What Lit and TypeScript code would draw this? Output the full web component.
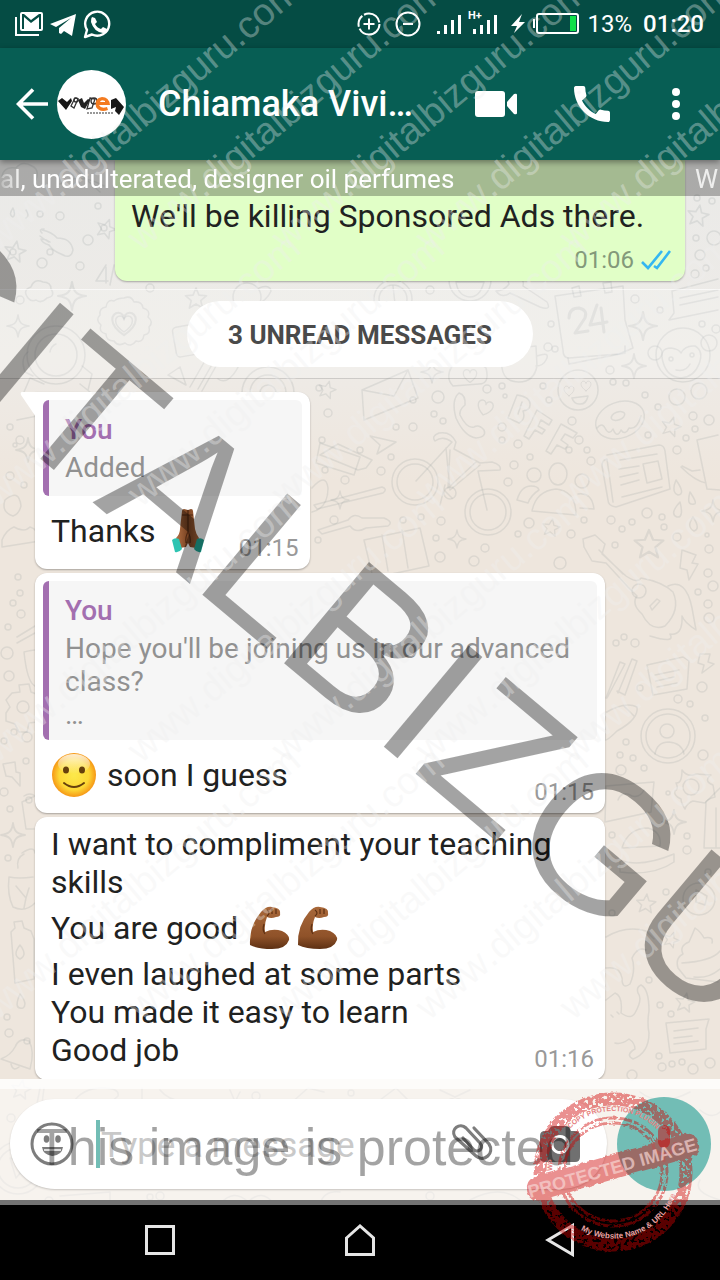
import { LitElement, html, svg, css } from "lit";
import { customElement } from "lit/decorators.js";

/* small bubbles scattered over the wallpaper: x, y, r */
const dots: number[][] = [
  [40, 214, 3], [60, 216, 4], [98, 206, 3], [88, 240, 5], [50, 252, 3], [42, 263, 5], [13, 252, 3], [80, 266, 4], [104, 228, 3],
  [697, 198, 3], [712, 201, 3], [696, 238, 3], [714, 238, 7], [700, 255, 5], [706, 268, 3], [695, 274, 4], [150, 288, 4], [20, 300, 4],
  [430, 290, 4], [635, 299, 4], [660, 310, 3], [551, 324, 3], [548, 347, 4], [555, 349, 3], [702, 324, 3], [716, 329, 4], [610, 370, 4], [626, 383, 3],
  [487, 389, 4], [502, 386, 3], [543, 386, 3], [613, 382, 3], [645, 395, 3], [438, 397, 6], [413, 400, 3], [505, 396, 2], [549, 400, 3],
  [413, 427, 4], [396, 427, 3], [434, 414, 3], [443, 421, 3], [502, 427, 4], [502, 440, 3], [518, 444, 4], [572, 421, 4], [579, 440, 4],
  [569, 450, 3], [587, 450, 3], [658, 407, 3], [693, 416, 4], [709, 420, 5], [695, 429, 3], [686, 438, 3], [648, 435, 3], [677, 450, 4],
  [391, 457, 3], [381, 471, 4], [530, 457, 3], [514, 465, 4], [591, 461, 4], [508, 482, 4], [403, 520, 3], [421, 517, 3], [441, 521, 4],
  [436, 538, 3], [485, 548, 4], [529, 523, 5], [518, 534, 3], [571, 534, 4], [584, 520, 3], [611, 520, 4], [622, 529, 3], [632, 522, 3],
  [647, 513, 5], [662, 517, 3], [664, 527, 3], [677, 537, 4], [707, 535, 2], [709, 549, 4], [615, 545, 3], [440, 557, 5], [474, 561, 5],
  [560, 563, 6], [708, 573, 4], [713, 586, 5], [698, 592, 3], [708, 604, 4], [709, 618, 5], [624, 637, 3], [635, 643, 4], [616, 643, 3],
  [640, 688, 3], [702, 687, 5], [678, 699, 4], [690, 704, 3], [705, 718, 3], [626, 742, 3], [620, 755, 3], [633, 758, 3], [703, 755, 5],
  [621, 770, 5], [644, 768, 3], [612, 835, 3], [668, 793, 2], [687, 836, 3], [687, 850, 4], [666, 892, 3], [612, 913, 3], [708, 872, 3],
  [649, 980, 3], [660, 1005, 3], [671, 1014, 3], [659, 1056, 3], [662, 1067, 4], [672, 1064, 3], [682, 1062, 3], [693, 1069, 5], [710, 1063, 5], [632, 1075, 5],
  [10, 427, 3], [20, 440, 4], [10, 476, 4], [24, 485, 3], [15, 445, 2], [18, 577, 3], [20, 593, 3], [13, 603, 3], [21, 614, 4],
  [8, 627, 3], [7, 653, 6], [9, 676, 5], [14, 732, 3], [27, 737, 5], [4, 741, 3], [26, 761, 3], [4, 792, 4], [10, 809, 3], [8, 858, 3], [29, 800, 3],
  [7, 1017, 3], [9, 1033, 4], [11, 1118, 4], [49, 1201, 4], [256, 1096, 4], [351, 1093, 3], [160, 1196, 4], [150, 1197, 3], [430, 1196, 4],
  [319, 388, 3], [328, 413, 4], [322, 440, 3], [334, 520, 4], [318, 540, 3], [345, 480, 4], [325, 470, 3], [360, 450, 3],
];

/* five-pointed stars: x, y, scale, turn */
const stars: number[][] = [
  [15, 252, 1.1, 10], [106, 229, 1, 20], [196, 299, 1.1, 0], [327, 390, 0.9, 15], [698, 216, 1.1, 10], [671, 427, 1, 15],
  [551, 528, 0.9, 10], [649, 545, 1.5, 0], [646, 904, 1, 5], [671, 940, 0.8, 20], [685, 1003, 1, 10], [21, 1090, 1, 10],
];

/* four-pointed sparkles: x, y, scale */
const sparkles: number[][] = [
  [18, 326, 1.1], [72, 296, 1.4], [643, 326, 1.4], [634, 366, 1.2], [432, 372, 1.1], [457, 539, 0.9], [713, 511, 1.1],
  [674, 822, 1.2], [13, 835, 1.2], [28, 450, 1.2], [340, 500, 0.9],
];

const starPath = "M0-10 2.7-3.5 9.6-3 4.3 1.4 6 8.2 0 4.5-6 8.2-4.3 1.4-9.6-3-2.7-3.5Z";
const sparklePath = "M0-10C1-3 3-1 10 0 3 1 1 3 0 10-1 3-3 1-10 0-3-1-1-3 0-10Z";
const heartPath = "M0 8C-12 0-9-8-4-8-1-8 0-5 0-4 0-5 1-8 4-8 9-8 12 0 0 8Z";

const wallpaper = () => svg`
  <g class="doodle">
    ${dots.map(([x, y, r]) => svg`<circle cx=${x} cy=${y} r=${r} />`)}
    ${stars.map(([x, y, s, t]) => svg`<path d=${starPath} transform="translate(${x} ${y}) rotate(${t}) scale(${s})" />`)}
    ${sparkles.map(([x, y, s]) => svg`<path d=${sparklePath} transform="translate(${x} ${y}) scale(${s})" />`)}
    <!-- hand, cloud, number -->
    <path d="M42 230q10 2 15 8 14 0 16 12-2 10-12 4-8-3-12-9-7-2-8-6 5 0 9 3M40 236q5 4 9 6M44 229q-6 0-2 4" />
    <path d="M28 298q-6-8 3-11 3-9 12-5 8 0 8 7 5 7-4 9-6 6-11 2-5 2-8-2Z" />
    <path d="M106 265l-10 16 12 0m-2-14 0 16m8-18-4 20" />
    <path d="M2 176q2-10 14-8 6-8 16-2 8 4 4 14M60 184q20-12 44 2M76 170l24 22" />
    <!-- rosette with heart -->
    <path d="M124 298q7-3 10 4 8-1 9 6 8 2 5 9 6 5 1 10 2 7-5 8-1 8-8 6-5 7-11 2-7 4-11-2-8 0-8-7-8-2-5-9-6-5-1-10-1-7 6-8 1-8 8-6 4-3 10-3Z" />
    <path d=${heartPath} transform="translate(124 324) scale(1.4)" />
    <path d=${heartPath} transform="translate(124 324)" />
    <!-- astronaut -->
    <circle cx="56" cy="355" r="29" /><circle cx="56" cy="355" r="21" /><path d="M28 352q-8 6-3 20l8 4M82 366l10 8-4 16M24 392l6-14 14 6M80 384l10 8M50 352q1-6 6-8" />
    <!-- camera -->
    <rect x="174" y="324" width="44" height="30" rx="4" transform="rotate(-10 196 338)" /><circle cx="198" cy="338" r="9" />
    <!-- target, drumsticks, planet -->
    <circle cx="268" cy="393" r="26" /><circle cx="268" cy="393" r="18" /><circle cx="268" cy="393" r="8" />
    <path d="M168 375l12-8 6 18Zm22 12 16-28m8 2-16 28m22-30-18 32M218 379q12 8 24-20" />
    <circle cx="247" cy="297" r="14" /><path d="M235 303q-12 8 2 8 28-5 34-20-1-7-12-3" />
    <!-- compass, smile, wrench -->
    <circle cx="393" cy="299" r="19" /><circle cx="393" cy="299" r="14" /><path d="M393 286l2 18" />
    <circle cx="470" cy="280" r="21" /><path d="M456 282h28q-4 15-14 15-12-1-14-15Z" />
    <path d="M496 291q6 8 14 2l30 14q12 4 7-5l-24-16q2-8-8-10-9 2-6 8-5 7-13 7Z" />
    <!-- calendar -->
    <path d="M555 296l68-10 2 34 8 28-14 6-50 4q-6 0-6-8Z" /><path d="M568 358l1 6 56-11v-7M572 288l2 9 7-1-2-10Zm31-5 2 10 7-1-1-10Z" />
    <path d="M569 318q0-10 10-10 9 2 6 10l-10 15 13-2M597 305l-7 20 17-3m-6-14 3 24" stroke-width="3" />
    <!-- speech card -->
    <path d="M672 291l46-12M672 291l2 22-5 7 49-10M680 298l38-8M680 305l38-8" />
    <!-- monkey -->
    <circle cx="683" cy="355" r="27" /><circle cx="655" cy="353" r="7" /><circle cx="709" cy="343" r="8" /><path d="M663 362q-4-14 8-14 8 1 10 5 4-8 14-7 9 5 4 18-5 13-18 14-14-1-18-16ZM676 370q10 2 14-6" />
    <circle cx="671" cy="359" r="2" /><circle cx="692" cy="355" r="2" /><circle cx="677" cy="397" r="8" /><circle cx="699" cy="391" r="8" />
    <!-- heart eyes, coffee, envelope -->
    <circle cx="578" cy="390" r="20" /><path d=${heartPath} transform="translate(569 391) scale(.6)" /><path d=${heartPath} transform="translate(586 386) scale(.6)" /><path d="M572 398l16-2q-2 9-9 8-5 0-7-6Z" />
    <path d="M500 350l36-4 1 20q-3 16-18 16-15 0-17-14Zm37 6q14-5 9 4-3 6-10 6M452 366q24-8 34 2 4 16-7 16l-26 2q-8-8-1-20Z" /><path d=${heartPath} transform="translate(470 376) scale(.8)" />
    <path d="M362 390l46-20 10 28-54 22ZM362 390l32 6 14-26" />
    <!-- phone and BFF -->
    <path d="M459 393q7 2 6 12-6 5-5 10 7 14 14 12 5-3 10 3 3 7-8 8-12-2-20-20-5-18 3-25Z" /><path d=${heartPath} transform="translate(485 408) rotate(15) scale(.9)" />
    <path d="M517 395q14 2 13 10 0 5-7 6 3 8-4 12l-11-5Zm5 7-4 12M537 410l15 10-3 5-8-5-3 6 7 4-3 4-7-4-6 9-5-3Zm24 14 16 9-4 5-8-4-4 6 7 5-3 4-8-4-6 9-5-3Z" />
    <!-- doughnut -->
    <ellipse cx="620" cy="420" rx="25" ry="18" transform="rotate(-20 620 420)" /><ellipse cx="618" cy="416" rx="7" ry="4" transform="rotate(-20 618 416)" /><path d="M597 428q5-6 8 0 4 8 8 1 4 10 8 1 4 6 8-2 8 2 12-12" />
    <!-- bicycle -->
    <circle cx="415" cy="482" r="23" /><circle cx="415" cy="482" r="18" /><circle cx="488" cy="512" r="23" /><circle cx="488" cy="512" r="18" />
    <path d="M416 481l36-39q-9-7-17-1-4-5 4-8 12-2 17 9l-2 7 26 14 12-1q10 3 8 8l-22 1 9 39M446 448l4 42 30-25M450 450l-2 38 28-26M444 490l8 8m-7-13-5 20" /><circle cx="450" cy="493" r="6" />
    <path d="M370 436l26 6-19 12 3-9Z" />
    <!-- people, newspaper, mug -->
    <circle cx="534" cy="475" r="7" /><ellipse cx="558" cy="474" rx="9" ry="11" /><circle cx="582" cy="481" r="7" /><path d="M532 511q4-20 24-22 20 2 20 26ZM517 500q4-14 14-14 7 0 8 4-8 5-11 13ZM578 494q14-2 16 15l-14-1" />
    <path d="M607 455l52-10q5 0 6 6l5 38-54 18q-8-1-8-7l-6-34q0-6 5-7l6 43M620 460l37-6M619 469l20-3M620 477l18-4M621 485l18-5M622 497l40-10M643 464l15-3 4 18-15 4Z" />
    <path d="M697 440l21-5M697 440l10 49 13 1M682 466l10 5 8-1M681 467q14 14 25 16" />
    <!-- drops -->
    <path d="M676 480q10 14 2 15-7-3-2-15ZM690 492q8 12 4 12-8 2-4-12ZM680 502q4 16-3 15-8-3 3-15ZM693 517q8 12 1 14-8-4-1-14ZM13 208q3 7 0 9-5-2 0-9ZM26 210q4 6 0 8M20 994q8 10 3 14-10 2-3-14Z" />
    <!-- pencil, rattle, map on the left of the bicycle -->
    <path d="M320 455l18-11 34 16-6 8-8 2-32-13Zm-6 50 68-18q6 2 1 6l-66 16ZM318 530l30-10q6-8 14-2h22q10 4 4 8l-22 2q-10 6-16-2l-28 8Z" />
    <path d="M364 540l56-12 9 38-56 12ZM382 535l6 36m14-41 6 38" />
    <!-- jar and balloon left -->
    <path d="M17 420l20-4M320 443l40 14-6 18-38-12Zm-8 45q14-16 16 0 0 20-16 24M5 500q14-12 16 6-2 8-8 10-12-4-8-16Zm-3 40q4-10 12-13 10 6 16 0 8 2 10 14l-38 6Z" />
    <!-- guitar -->
    <path d="M583 539l12-4 10 9-3 10 24 22q12 8 15 2 22 4 32 14 8 18-8 34-14 6-23-12-11-10-5-18l-9-9-22-24-14-2-8-14Zm16 11 24 24" /><circle cx="639" cy="591" r="7" /><path d="M650 606l7-7 3 2-8 9ZM668 586q18-8 24 22l4 22q-12-8-14-14 1 20-12 18 6 10-20 2" />
    <path d="M682 550l14 5-4 8 6 1-9 16-2-10-7-2Z" />
    <!-- tools and chat card -->
    <path d="M606 698l14-36 5 2-18 34M618 693l14-34 5 2-12 34-8-4ZM647 665l36-8 6 4-2 28-34 6ZM655 675l24-5M656 681l18-4M657 687l20-4M700 654l10 0-2 8 6 2-12 9 2-8-6-2Z" />
    <!-- rocket and profile disc -->
    <path d="M605 713q20-12 32-6 2 12-20 24-10 10-12 9ZM624 706l10 10" /><circle cx="668" cy="736" r="27" /><circle cx="668" cy="736" r="22" /><circle cx="667" cy="731" r="7" /><path d="M655 754q2-12 14-12 13 1 15 12" />
    <!-- paint splash and popcorn -->
    <path d="M682 770q6 8 14 4l15 1q-8 6 2 10l2 12q-8 2-10 6l-12-2q-6 2-8 8-4-6-4-10-8-4-6-8 4-2 1-8 6 1 6-13Z" /><circle cx="691" cy="787" r="8" />
    <path d="M606 786l48-4-3 30-46 10ZM618 800q4-10 14-4 8 2 12-6M622 848q6-20 26-20 14 4 12 18Zm-2 12q20 8 54-6v8q-20 14-54 10Z" />
    <path d="M706 802l14-14M706 802l-2 46h16M716 808v40" />
    <!-- cake, cat -->
    <circle cx="699" cy="899" r="16" /><path d="M696 890l11 6-2 9-9-3ZM683 954q-4-8 6-12 4-9 6-14 6 4 9 10 10-2 8 5M683 954q-8 4-5 14l8 10 32 4M682 963q30-2 38-12M694 977q14 2 26-8" />
    <path d="M606 937q20-12 40-6l8 8M606 968q14-2 16 10 0 12 8 6 6-14 2-26 6-12 14-8M606 1000l9-7q8 3 6 20 10 7 14 0 8-14 3-20-2-6 3-8 8 4 8 26-2 12 0 22 0 20-16 26-8-4 2-10 0-6-6-10-8 6-14 4M611 1015l2 2m4-5 2 2" />
    <!-- mailbox, cupcake, gear, leaf, bottle, bell -->
    <path d="M666 1023l43-4-3 10v20l-36 4ZM674 1031l24-3M674 1038l18-2M674 1044l24-3" />
    <path d="M16 693l10-1 2 8 8 3 4 6-3 6 3 7-6 8-8 1-2 9h-8l-4-8-9-3v-8l4-6-4-7 6-7 8-1Z" transform="translate(3 -8)" /><circle cx="23" cy="707" r="6" />
    <path d="M17 637l18-11M17 643l18-10M24 652q8-2 11-2M24 652q3 30 11 34M3 764l12-2 1 10 4 1v13l-8-9-6-1ZM24 796q6-4 11 0l-13 6 4 27 8 0" />
    <path d="M9 877q10 2 24 0M9 877q-2 18 4 30 12 6 22-4M16 886l10 12 3-10M26 898l-2 10M11 932l4-4-1-6 8-1 2 7 7 3 3 8v40l-19 4Z" /><path d="M20 945q8 10 0 14-8-4 0-14Z" />
    <path d="M1 1059q10-4 14-12 4-10 14-6 6 10 1 28Zm10 5q2 8 8 3" /><circle cx="27" cy="1041" r="3" />
    <path d="M22 853q12-8 13 0M18 868q-2-10 6-14" />
    <!-- shapes under the compose bar -->
    <path d="M40 1088l-3 16M44 1088l-2 16M72 1104q10-16 30-16 18 0 16 8-10 12-36 8M142 1088v16M160 1090q8 10 24 12M230 1090l6 14m4-12-6 12M290 1104l18-16 16 4M380 1100l16-12 14 14M440 1090l30 14m0-14-30 14M60 1196l50-4v12M220 1204q14-16 28-2 14-14 26 2M320 1204q4-14 20-12M470 1200q30-16 50 0M640 1092q20 16 50 0M700 1110q12 10 20 2M700 1180q-8 12 20 20" />
    <circle cx="18" cy="1168" r="26" /><circle cx="18" cy="1168" r="20" /><path d="M10 1158l6 20 12-14Z" />
  </g>`;

const prayer = html`<svg class="emoji" viewBox="0 0 48 48" role="img" aria-label="folded hands">
  <defs><linearGradient id="palm" x1="0" x2="1"><stop offset="0" stop-color="#b26f43" /><stop offset=".5" stop-color="#7a4423" /><stop offset="1" stop-color="#a9663c" /></linearGradient></defs>
  <path fill="url(#palm)" d="M18 4q0-2 2-2l4 1 3-1q2 0 2 2l2 18q1 5 4 9l-3 10-6-1-2-4-2 4-6 1-4-10q4-4 4-9Z" />
  <path fill="none" stroke="#4d2712" stroke-width="1.200" d="M24 3v22q-3 5-2 11M24 25q3 5 2 11M18 8h11" />
  <path fill="#2ec4b2" d="M8 33q3-3 7-1l3 10q-3 4-7 3Z" /><path fill="#22ad9c" d="M40 33q-3-3-7-1l-3 10q3 4 7 3Z" />
</svg>`;

const smile = html`<svg class="emoji" viewBox="0 0 48 48" role="img" aria-label="slightly smiling face">
  <defs><radialGradient id="face" cx=".5" cy=".5" r=".52"><stop offset="0" stop-color="#fce94b" /><stop offset=".65" stop-color="#fdd835" /><stop offset="1" stop-color="#f58f12" /></radialGradient>
  <linearGradient id="shine" x1="0" x2="0" y1="0" y2="1"><stop offset="0" stop-color="#fff" stop-opacity=".8" /><stop offset="1" stop-color="#fff" stop-opacity="0" /></linearGradient></defs>
  <circle cx="23" cy="24" r="22" fill="url(#face)" /><ellipse cx="23" cy="13" rx="16" ry="10" fill="url(#shine)" />
  <ellipse cx="15" cy="19" rx="3" ry="3.500" fill="#66400c" /><ellipse cx="31" cy="19" rx="3" ry="3.500" fill="#66400c" />
  <path d="M13 32q10 8 20 0" fill="none" stroke="#66400c" stroke-width="2" stroke-linecap="round" />
</svg>`;

const muscle = html`<svg class="emoji" viewBox="0 0 48 48" role="img" aria-label="flexed biceps">
  <defs><linearGradient id="arm" x1="0" x2="0" y1="0" y2="1"><stop offset="0" stop-color="#a8683a" /><stop offset=".7" stop-color="#8f5229" /><stop offset="1" stop-color="#5d3013" /></linearGradient></defs>
  <path fill="url(#arm)" d="M4 41Q3 22 15 8q5-6 11-5 9 1 8 6 1 4-4 4-5 2-9 0-3 7-2 15 8-4 17-1 8 4 7 9-3 9-17 9-14 0-22-4Z" />
  <path fill="none" stroke="#5d3013" stroke-width="1.200" d="M26 5v5m4-5v5M21 6q4 3 0 6M18 20q-2 6 1 10" />
</svg>`;

@customElement("app-root")
export class AppRoot extends LitElement {
  static styles = css`
    :host { display: block; }
    * { box-sizing: border-box; }
    button { border: 0; padding: 0; background: none; color: inherit; font: inherit; display: flex; align-items: center; justify-content: center; flex: none; }
    svg { display: block; flex: none; }
    .phone { position: relative; display: flex; flex-direction: column; height: 100vh; overflow: hidden; font-family: Roboto, sans-serif; color: #1f2221; background: #eee6dd; }

    .status { flex: none; height: 48px; padding: 0 16px 0 15px; display: flex; align-items: center; justify-content: space-between; background: #054c44; color: #fff; font-size: 24px; }
    .status-group { display: flex; align-items: center; gap: 8px; }
    .clock { font-weight: 500; margin-left: 3px; }

    .bar { flex: none; height: 112px; padding-right: 8px; display: flex; align-items: center; background: #075e54; color: #fff; position: relative; z-index: 1; box-shadow: 0 2px 6px rgba(0, 0, 0, .4); }
    .back { width: 57px; height: 64px; padding-left: 7px; }
    .avatar { width: 69px; height: 69px; border-radius: 50%; background: #fff; overflow: hidden; }
    .name { flex: 1; min-width: 0; margin: 0 0 0 32px; font-size: 36px; line-height: 44px; font-weight: 500; white-space: nowrap; overflow: hidden; text-overflow: ellipsis; }
    .action { width: 96px; height: 64px; }
    .more { width: 72px; }

    .stage { position: relative; flex: 1; min-height: 0; display: flex; flex-direction: column; background: linear-gradient(#eaeae8, #eeebe7 200px, #eee6dd 320px, #eee6dd); }
    .wallpaper { position: absolute; inset: 0; width: 100%; height: 100%; }
    .doodle { fill: none; stroke: #8c9696; stroke-opacity: .18; stroke-width: 1.5; stroke-linejoin: round; stroke-linecap: round; }

    .chat { position: relative; flex: 1; min-height: 0; overflow: hidden; display: flex; flex-direction: column; }
    .ticker { position: absolute; z-index: 1; top: 0; left: 0; right: 0; height: 36px; display: flex; justify-content: space-between; padding: 0 2px 0 0; background: rgba(0, 0, 0, .27); color: #fff; font-size: 26px; line-height: 38px; white-space: nowrap; overflow: hidden; }
    .ticker-text { -webkit-mask-image: linear-gradient(90deg, rgba(0, 0, 0, .2), #000 24px); mask-image: linear-gradient(90deg, rgba(0, 0, 0, .2), #000 24px); }
    .ticker-next { opacity: .8; }

    .bubble { position: relative; flex: none; display: flex; flex-direction: column; background: #fff; border-radius: 12px; padding: 8px 8px 7px; box-shadow: 0 1px 2px rgba(0, 0, 0, .3); max-width: calc(100% - 80px); }
    .thread { display: flex; flex-direction: column; align-items: flex-start; gap: 4px; padding: 0 35px; }
    .thread-in { padding-top: 13px; }
    .out { align-self: flex-end; width: calc(100% - 80px); background: #e1ffc7; padding-top: 37px; border-radius: 0 0 12px 12px; }
    .first { border-top-left-radius: 0; }
    .tail { position: absolute; top: 0; left: -15px; }
    .quote { display: flex; flex-direction: column; gap: 5px; min-height: 96px; padding: 13px 16px 9px; border-left: 6px solid #a36fb0; border-radius: 6px; background: #f6f6f6; font-size: 28px; line-height: 33px; color: #919191; }
    .quote + .text { margin-top: 8px; }
    .author { color: #a36fb0; font-weight: 500; }
    .quote p, .text p { margin: 0; }
    .text { padding: 0 8px; font-size: 32px; line-height: 38px; }
    .text .with-emoji { display: flex; align-items: center; height: 54px; gap: 8px; }
    .emojis { display: flex; }
    .emoji { width: 48px; height: 48px; }
    .stamp { display: flex; align-items: center; justify-content: flex-end; gap: 7px; margin-top: -24px; padding: 0 3px; font-size: 24px; line-height: 28px; color: #999; }
    .short { padding-right: 90px; }
    .out .stamp { margin-top: 11px; padding-right: 6px; color: #83997a; }

    .unread { flex: none; height: 90px; margin-top: 8px; display: flex; align-items: center; justify-content: center; background: rgba(255, 255, 255, .2); border-top: 1px solid rgba(255, 255, 255, .6); border-bottom: 1px solid rgba(0, 0, 0, .15); }
    .pill { height: 66px; padding: 0 41px; border-radius: 33px; background: #fff; color: #4a4a4a; font-size: 26px; line-height: 68px; font-weight: 700; }

    .compose { position: relative; flex: none; display: flex; align-items: center; gap: 10px; padding: 10px 9px 11px 10px; background: rgba(255, 255, 255, .5); border-top: 10px solid rgba(255, 255, 255, .72); }
    .compose-foot { position: relative; flex: none; height: 5px; background: #737373; }
    .field { flex: 1; min-width: 0; height: 90px; display: flex; align-items: center; padding: 0 27px 0 20px; border-radius: 45px; background: #fff; box-shadow: 0 1px 2px rgba(0, 0, 0, .2); color: #7d7d7d; }
    .caret { flex: none; width: 4px; height: 48px; margin: 0 1px 0 22px; background: #72bdb5; }
    .entry { flex: 1; min-width: 0; height: 60px; border: 0; padding: 2px 0 0; outline: 0; background: none; font: 35px Roboto, sans-serif; color: #1f2221; }
    .entry::placeholder { color: #c9c9c9; opacity: 1; }
    .attach { margin-right: 47px; }
    .mic { width: 94px; height: 94px; margin: -2px 0; border-radius: 50%; background: #72bdb5; }

    .nav { flex: none; height: 75px; display: flex; justify-content: center; gap: 120px; padding-bottom: 5px; background: #000; }
    .nav button { width: 80px; }

    .marks { position: absolute; z-index: 2; inset: 0; width: 100%; height: 100%; pointer-events: none; }
    .site { font-family: "Liberation Sans", Arial, sans-serif; font-size: 38px; fill: #efefef; fill-opacity: .36; font-kerning: none; }
    .brand { font-family: "Liberation Sans", Arial, sans-serif; font-size: 192px; fill: #000; fill-opacity: .36; font-kerning: none; }
    .notice { font-family: "Liberation Sans", Arial, sans-serif; font-size: 52px; fill: #000; fill-opacity: .36; }
    .seal-text { font-family: "Liberation Sans", Arial, sans-serif; font-weight: 700; }
  `;

  private site() {
    const rows = [252, 508, 764, 1021];
    const cols = [-11, 133, 277, 421, 565];
    return rows.map((y) =>
      cols.map((x) => svg`<text class="site" transform="translate(${x + 8} ${y}) rotate(-40)">www.digitalbizguru.com</text>`)
    );
  }

  render() {
    return html`
      <div class="phone">
        <div class="status">
          <svg width="96" height="48" viewBox="15 0 96 48" fill="#fff" aria-hidden="true">
            <path d="M15 17h2v17h22v2H15Z" />
            <path fill-rule="evenodd" d="M22 12h19q2 0 2 2v15q0 2-2 2H22q-2 0-2-2V14q0-2 2-2Zm0 2v15h2V17l7 6 8-6v12h2V14h-2l-8 6-7-6Z" />
            <path d="M50 24 76 14 72 36 64 31 61 34 59 33 59 28 71 18 56 27Z" />
            <path d="M85 37l2-7A12 12 0 1 1 92 34.500Z" fill="none" stroke="#fff" stroke-width="2.400" stroke-linejoin="round" />
            <path d="M92 17l3 1 2 4-2 2q2 4 6 5l2-2 4 2q0 4-4 4-9-1-12-11 0-4 1-5Z" />
          </svg>
          <div class="status-group">
            <svg width="223" height="48" viewBox="358 0 223 48" fill="#fff" aria-hidden="true">
              <g fill="none" stroke="#fff" stroke-width="2">
                <circle cx="370" cy="24" r="10.500" stroke-dasharray="28 2 12 2 20 2" /><path d="M364.500 24h11M370 18.500v11" />
                <circle cx="409" cy="24" r="11.500" /><path d="M404 24h10" />
                <rect x="538" y="14" width="41" height="19" rx="2" />
              </g>
              <path d="M438 31h3v3h-3Zm7-6h3v9h-3Zm7-5h3v14h-3Zm7-5h3v19h-3ZM474 29h3v5h-3Zm7-4h3v9h-3Zm7-5h3v14h-3Zm7-5h3v19h-3Z" />
              <path d="M523 14l-11 12h6l-3 7 11-11h-6Z" /><path d="M534 19h2v9h-2Z" /><path fill="#10e04a" d="M571 16h6v15h-6Z" />
              <text x="469" y="19" font-family="Roboto, sans-serif" font-weight="700" font-size="11">H+</text>
            </svg>
            <span>13%</span>
            <span class="clock">01:20</span>
          </div>
        </div>

        <header class="bar">
          <button class="back" aria-label="Back">
            <svg width="32" height="32" viewBox="0 0 32 32" fill="none" stroke="#fff" stroke-width="3.600"><path d="M17 1.500 2.500 16 17 30.500M2 16h30" /></svg>
          </button>
          <svg class="avatar" viewBox="0 0 69 69" role="img" aria-label="Contact photo">
            <path d="M1 31l4-3 5 4 4-4 1 3-6 9Z" fill="#171717" />
            <g fill="none" stroke="#333" stroke-width="1.300"><path d="M14 36l4-8 3 1-4 9Z" /><path d="M33 28l5 1-3 9-5 1Z" /><circle cx="19" cy="30" r="2" /><circle cx="37" cy="31" r="3" /></g>
            <path d="M21 30l4-2 2 5 4-4 2 1-5 9-4-2Z" fill="#222" />
            <path d="M53 35H42q2 4 8 2l1 3q-8 3-12-3-2-9 6-10 7 0 8 8Zm-5-4q-4-2-5 1h5Z" fill="#f47b20" fill-rule="evenodd" />
            <path d="M54 39V30l5-2 8 9-5 8-4-4 1-4Z" fill="#171717" /><path d="M30 43h26" stroke="#777" stroke-width="1.500" stroke-dasharray="2 1" />
          </svg>
          <h1 class="name">Chiamaka Vivi…</h1>
          <button class="action" aria-label="Video call">
            <svg width="42" height="26" viewBox="0 0 42 26" fill="#fff"><rect width="30" height="26" rx="3" /><path d="M32 11l7-8q3-1 3 1v18q0 2-3 1l-7-8Z" /></svg>
          </button>
          <button class="action" aria-label="Voice call">
            <svg width="36" height="36" viewBox="3 3 18 18" fill="#fff"><path d="M20.010 15.380c-1.230 0-2.420-.2-3.530-.56-.35-.12-.74-.03-1.010.24l-1.570 1.970c-2.830-1.350-5.480-3.900-6.890-6.830l1.950-1.660c.27-.28.35-.67.24-1.020-.37-1.110-.56-2.300-.56-3.530 0-.54-.45-.99-.99-.99H4.190C3.650 3 3 3.240 3 3.990 3 13.280 10.730 21 20.010 21c.71 0 .99-.63.99-1.180v-3.450c0-.54-.45-.99-.99-.99z" /></svg>
          </button>
          <button class="action more" aria-label="More options">
            <svg width="8" height="32" viewBox="0 0 8 32" fill="#fff"><circle cx="4" cy="4" r="4" /><circle cx="4" cy="16" r="4" /><circle cx="4" cy="28" r="4" /></svg>
          </button>
        </header>

        <div class="stage">
          <svg class="wallpaper" viewBox="0 160 720 1045" preserveAspectRatio="xMidYMin slice" aria-hidden="true">${wallpaper()}</svg>
          <main class="chat">
            <div class="ticker"><span class="ticker-text">al, unadulterated, designer oil perfumes</span><span class="ticker-next">W</span></div>
            <div class="thread">
              <article class="bubble out">
                <div class="text"><p>We'll be killing Sponsored Ads there.</p></div>
                <div class="stamp">
                  <time>01:06</time>
                  <svg width="30" height="20" viewBox="0 0 30 20" fill="none" stroke="#34b7f1" stroke-width="2.600" role="img" aria-label="Read"><path d="M1 12l6 6L21 1M13 16l3 2L29 1" /></svg>
                </div>
              </article>
            </div>
            <div class="unread"><span class="pill">3 UNREAD MESSAGES</span></div>
            <div class="thread thread-in">
              <article class="bubble first">
                <svg class="tail" width="16" height="25" viewBox="0 0 16 25" fill="#fff" aria-hidden="true"><path d="M16 0H2Q0 0 1 3l15 22Z" /></svg>
                <div class="quote"><div class="author">You</div><p>Added</p></div>
                <div class="text short"><p class="with-emoji"><span>Thanks</span>${prayer}</p></div>
                <div class="stamp"><time>01:15</time></div>
              </article>
              <article class="bubble">
                <div class="quote"><div class="author">You</div><p>Hope you'll be joining us in our advanced class?<br />…</p></div>
                <div class="text"><p class="with-emoji">${smile}<span>soon I guess</span></p></div>
                <div class="stamp"><time>01:15</time></div>
              </article>
              <article class="bubble">
                <div class="text">
                  <p>I want to compliment your teaching skills</p>
                  <p class="with-emoji"><span>You are good</span><span class="emojis">${muscle}${muscle}</span></p>
                  <p>I even laughed at some parts</p>
                  <p>You made it easy to learn</p>
                  <p>Good job</p>
                </div>
                <div class="stamp"><time>01:16</time></div>
              </article>
            </div>
          </main>

          <footer class="compose">
            <div class="field">
              <button aria-label="Emoji">
                <svg width="44" height="44" viewBox="0 0 44 44"><circle cx="22" cy="22" r="20" fill="none" stroke="#7d7d7d" stroke-width="3" /><ellipse cx="16.500" cy="17" rx="2.800" ry="3.800" fill="#7d7d7d" /><ellipse cx="28" cy="17" rx="2.800" ry="3.800" fill="#7d7d7d" /><path d="M12 25h21q-1 8-10.500 9Q13 33 12 25Z" fill="#7d7d7d" /><path d="M14 28h17" stroke="#fff" stroke-width="1.500" /></svg>
              </button>
              <span class="caret"></span>
              <input class="entry" type="text" aria-label="Message" placeholder="Type a message" />
              <button class="attach" aria-label="Attach">
                <svg width="42" height="40" viewBox="0 0 42 40" fill="none" stroke="#7d7d7d" stroke-width="3.200" stroke-linecap="round"><path d="M23 4l15 16c6 9-5 19-13 12L4 13C-1 5 9-2 15 4l14 15c5 6-3 10-6 7L12 14" /></svg>
              </button>
              <button aria-label="Camera">
                <svg width="40" height="38" viewBox="0 0 40 38"><path fill-rule="evenodd" fill="#707070" d="M13 1h14q2 0 3 3l1 2h4q5 0 5 5v21q0 5-5 5H5q-5 0-5-5V11q0-5 5-5h3l2-3q1-2 3-2Zm7 9a9.500 9.500 0 1 0 .1 0Zm0 3a6.500 6.500 0 1 1-.1 0Z" /></svg>
              </button>
            </div>
            <button class="mic" aria-label="Voice message">
              <svg width="28" height="38" viewBox="0 0 28 38" fill="none"><rect x="8" y="0" width="12" height="23" rx="6" fill="#a0605f" /><path d="M3 17q0 12 11 12t11-12M14 29v8" stroke="#8fa79f" stroke-width="3" /></svg>
            </button>
          </footer>
          <div class="compose-foot"></div>
        </div>

        <nav class="nav" aria-label="System">
          <button aria-label="Recent apps"><svg width="30" height="30" viewBox="0 0 30 30" fill="none" stroke="#e6e6e6" stroke-width="3"><path d="M1.500 1.500h27v27h-27Z" /></svg></button>
          <button aria-label="Home"><svg width="30" height="32" viewBox="0 0 30 32" fill="none" stroke="#e6e6e6" stroke-width="3"><path d="M1.500 14 15 2l13.500 12v16.500h-27Z" /></svg></button>
          <button aria-label="Go back"><svg width="30" height="34" viewBox="0 0 30 34" fill="none" stroke="#e6e6e6" stroke-width="3"><path d="M27.500 2.500v29L3 17Z" /></svg></button>
        </nav>

        <svg class="marks" viewBox="0 0 720 1280" preserveAspectRatio="xMidYMid slice">
          <defs>
            <filter id="rough" x="-5%" y="-5%" width="110%" height="110%">
              <feTurbulence type="fractalNoise" baseFrequency=".28" numOctaves="2" seed="4" result="n" />
              <feColorMatrix in="n" type="matrix" values="0 0 0 0 0  0 0 0 0 0  0 0 0 0 0  0 0 0 -14 8.900" result="holes" />
              <feDisplacementMap in="SourceGraphic" in2="n" scale="3" xChannelSelector="R" yChannelSelector="G" result="edge" />
              <feComposite in="edge" in2="holes" operator="in" />
            </filter>
            <filter id="edge" x="-5%" y="-20%" width="110%" height="140%">
              <feTurbulence type="fractalNoise" baseFrequency=".2" numOctaves="2" seed="9" result="n" />
              <feDisplacementMap in="SourceGraphic" in2="n" scale="4" xChannelSelector="R" yChannelSelector="G" />
            </filter>
            <path id="arc-top" d="M552 1172A61 61 0 0 1 674 1172" />
            <path id="arc-bottom" d="M581 1230A66 66 0 0 0 678 1186" />
          </defs>
          <text class="brand" transform="translate(-300 173) rotate(40)">DIGITALBIZGURU</text>
          ${this.site()}
          <text class="notice" x="36" y="1165">This image is protected</text>
          <g opacity=".43">
            <g filter="url(#rough)" fill="none" stroke="#d00000">
              <circle cx="613" cy="1172" r="73" stroke-width="13" />
              <circle cx="613" cy="1172" r="54" stroke-width="3" />
              <circle cx="613" cy="1172" r="49" stroke-width="3" />
            </g>
            <g filter="url(#edge)"><rect x="524" y="1155" width="178" height="24" rx="11" fill="#d00000" transform="rotate(-16 613 1167)" /></g>
          </g>
          <g class="seal-text">
            <text font-size="7" fill="#e67f7f"><textPath href="#arc-top" startOffset="1">WP</textPath></text>
            <text font-size="7" fill="#e67f7f"><textPath href="#arc-top" startOffset="48">COPY PROTECTION PLUGIN</textPath></text>
            <text font-size="8" fill="#eda3a3"><textPath href="#arc-bottom">My Website Name &amp; URL Here</textPath></text>
            <text font-size="18" fill="#f6d5d3" fill-opacity=".7" text-anchor="middle" transform="translate(614 1174) rotate(-16)">PROTECTED IMAGE</text>
          </g>
        </svg>
      </div>
    `;
  }
}
